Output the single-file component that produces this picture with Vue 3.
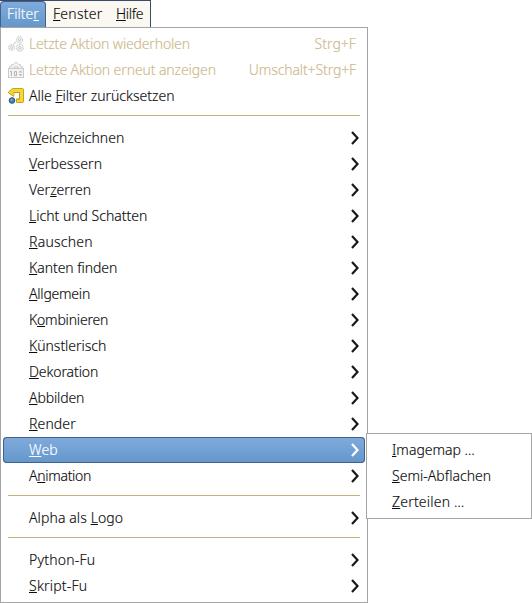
<script setup>
const split = (s) => {
  const [a, rest] = s.split('_')
  return rest === undefined ? [a, '', ''] : [a, rest[0], rest.slice(1)]
}
const entry = (text, spacing = 0, extra = {}) => ({ parts: split(text), spacing, ...extra })
const bar = [entry('Filte_r', 0.05, { open: true }), entry('_Fenster', 0.25), entry('_Hilfe', -0.3)]
const sub = { arrow: true }
const groups = [
  [
    entry('Letzte Aktion wiederholen', -0.16, { icon: 'repeat', key: 'Strg+F', keySpacing: 0.05, off: true }),
    entry('Letzte Aktion erneut anzeigen', -0.1, { icon: 'show', key: 'Umschalt+Strg+F', keySpacing: -0.12, off: true }),
    entry('Alle _Filter zurücksetzen', 0, { icon: 'reset' }),
  ],
  [
    entry('_Weichzeichnen', 0, sub),
    entry('_Verbessern', 0.12, sub),
    entry('Ver_zerren', 0, sub),
    entry('_Licht und Schatten', 0, sub),
    entry('_Rauschen', 0.25, sub),
    entry('_Kanten finden', -0.05, sub),
    entry('_Allgemein', -0.22, sub),
    entry('K_ombinieren', -0.2, sub),
    entry('_Künstlerisch', -0.03, sub),
    entry('_Dekoration', -0.1, sub),
    entry('_Abbilden', -0.12, sub),
    entry('_Render', 0.12, sub),
    entry('_Web', 0.1, { arrow: true, active: true }),
    entry('A_nimation', -0.3, sub),
  ],
  [entry('Alpha als _Logo', 0.1, sub)],
  [entry('Python-Fu', 0.22, sub), entry('_Skript-Fu', 0.22, sub)],
]
const submenu = [entry('_Imagemap …', 0), entry('_Semi-Abflachen', 0.03), entry('_Zerteilen …', 0.2)]
</script>

<template>
  <div class="screen">
    <nav class="bar">
      <div v-for="(b, i) in bar" :key="i" class="tab" :class="{ open: b.open }">
        <span class="label" :style="{ letterSpacing: b.spacing + 'px' }">{{ b.parts[0] }}<u>{{ b.parts[1] }}</u>{{ b.parts[2] }}</span>
      </div>
    </nav>
    <div class="menu">
      <div v-for="(g, gi) in groups" :key="gi" class="group">
        <div v-for="(m, i) in g" :key="i" class="row" :class="{ off: m.off, active: m.active }">
          <span class="icon">
            <svg v-if="m.icon === 'repeat'" width="16" height="16" viewBox="0 0 16 16" fill="#f3f3f3" stroke="#c3c4c2">
              <g stroke-dasharray="2 1"><circle cx="11.500" cy="3.800" r="3.200" /><circle cx="3.500" cy="11.500" r="2.900" /><circle cx="11.800" cy="11.800" r="3.500" /></g>
              <g fill="#fff"><circle cx="11.500" cy="3.800" r="1" /><circle cx="3.500" cy="11.500" r="1" /><circle cx="11.800" cy="11.800" r="1.200" /></g>
              <path d="M5 8.500L8 6" />
            </svg>
            <svg v-if="m.icon === 'show'" width="16" height="16" viewBox="0 0 16 16">
              <path d="M1.500 7V4.500h2v-2h2l1.500-2h2l1.500 2h2v2h2V7" fill="#f1f1f0" stroke="#d0d0ce" />
              <path d="M5.500 7l1-2h3l1 2" fill="#fff" stroke="#c6c6c4" />
              <rect x=".5" y="6.500" width="15" height="9" fill="#f3f3f2" stroke="#cbcbc9" />
              <path d="M2 9.500h1.500V14M6.500 9.500h2v4h-2z" fill="none" stroke="#b5b6b3" />
              <path d="M10.500 10.500l2-2 2 2zM10.500 12h4l-2 2z" fill="#b9bab7" />
            </svg>
            <svg v-if="m.icon === 'reset'" width="16" height="16" viewBox="0 0 16 16">
              <path d="M4.500.500h10q1 0 1 1v12q0 1-1 1h-6v-3.500h3V4.500H6V8.500L.500 5V4z" fill="#f3d73a" stroke="#c4a41c" stroke-linejoin="round" />
              <path d="M6.500 4.500h5v6.500h-3V9h-2z" fill="#fff" />
              <path d="M5.500 4.500h6v6.500h-3" fill="none" stroke="#b99b18" />
              <circle cx="4" cy="12.500" r="2.800" fill="#4d7db8" stroke="#294b7b" />
              <circle cx="3.500" cy="11.700" r="1" fill="#86afd9" />
            </svg>
          </span>
          <span class="label" :style="{ letterSpacing: m.spacing + 'px' }">{{ m.parts[0] }}<u>{{ m.parts[1] }}</u>{{ m.parts[2] }}</span>
          <span v-if="m.key" class="key" :style="{ letterSpacing: m.keySpacing + 'px' }">{{ m.key }}</span>
          <svg v-if="m.arrow" class="arrow" width="9" height="14" viewBox="0 0 9 14"><path d="M1 1L6.500 7L1 13" /></svg>
        </div>
      </div>
    </div>
    <div class="submenu">
      <div v-for="(m, i) in submenu" :key="i" class="row">
        <span class="label" :style="{ letterSpacing: m.spacing + 'px' }">{{ m.parts[0] }}<u>{{ m.parts[1] }}</u>{{ m.parts[2] }}</span>
      </div>
    </div>
  </div>
</template>

<style>
body { background: #fff; overflow: hidden; }
</style>
<style scoped>
.screen { position: relative; width: 532px; height: 603px; font: 300 14px/26px "Noto Sans", sans-serif; color: #0c0c0c; -webkit-text-stroke: 0.15px currentColor; }
.screen * { box-sizing: border-box; }
.bar { display: flex; width: 151px; height: 27px; background: #fbf8f1; border-top: 1px solid #3b4a66; border-right: 1px solid #3b4a66; }
.tab { padding-left: 7px; }
.tab:nth-child(2) { width: 63px; }
.tab.open { width: 46px; padding-left: 6px; color: #fff; background: linear-gradient(#7fabdc, #6597cb); border: 1px solid #41618a; border-bottom: 0; border-radius: 4px 4px 0 0; line-height: 24px; }
.label { white-space: pre; }
u { text-decoration-thickness: 1px; text-underline-offset: 1px; text-decoration-skip-ink: none; }
.menu { width: 368px; height: 576px; border: 1px solid #a5a5a5; padding: 3px 2px; }
.group + .group::before { content: ""; display: block; height: 1px; margin: 6px 5px 9px; background: #c5b283; }
.row { display: flex; align-items: center; height: 26px; padding: 0 5px; border-radius: 4px; }
.icon { display: flex; width: 21px; }
.key, .arrow { margin-left: auto; }
.key { margin-right: 4px; }
.arrow { fill: none; stroke: #1a1a1a; stroke-width: 2.2; }
.off { color: #cdb98c; }
.active { color: #fff; background: linear-gradient(#7fabdc, #6597cb); box-shadow: inset 0 0 0 1px #41618a; }
.active .arrow { stroke: #fff; }
.submenu { position: absolute; left: 366px; top: 433px; width: 166px; height: 86px; padding: 3px 0; background: #fff; border: 1px solid #a5a5a5; }
.submenu .row { padding-left: 25px; }
</style>
